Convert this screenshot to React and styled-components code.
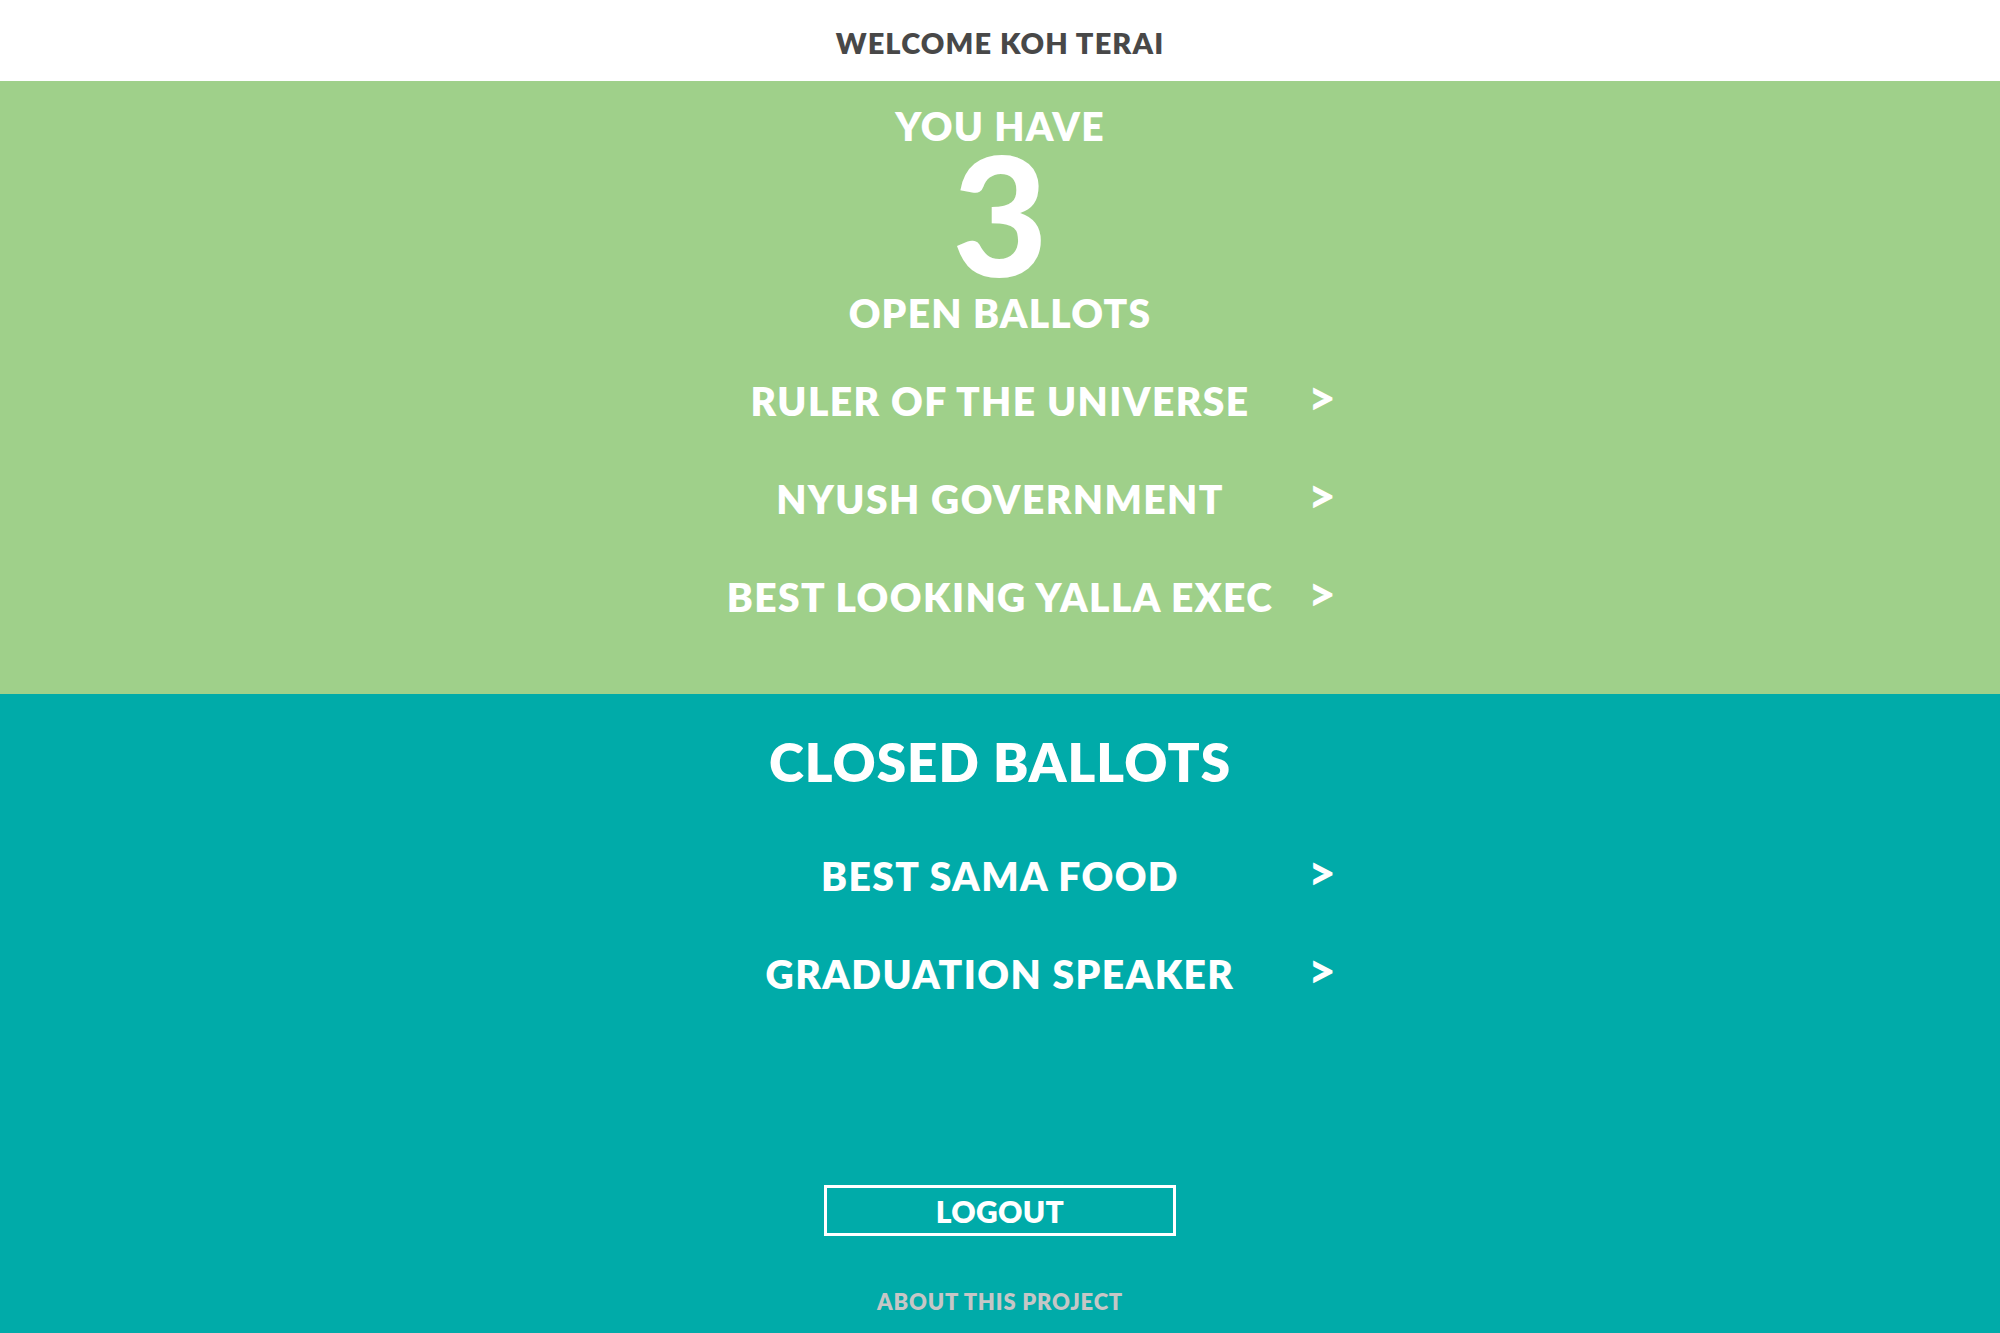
import React from 'react'
import styled, { createGlobalStyle } from 'styled-components'

const Global = createGlobalStyle`
  html, body {
    margin: 0;
    padding: 0;
    background: #00aba9;
  }
  body {
    font-family: Lato, "Open Sans", sans-serif;
    font-weight: 800;
    color: #fff;
  }
`

const Page = styled.div`
  width: 100%;
  display: flex;
  flex-direction: column;
`

const TopBar = styled.header`
  height: 81px;
  background: #fff;
  display: flex;
  align-items: center;
  justify-content: center;
  padding-top: 3px;
  box-sizing: border-box;
`

const Welcome = styled.h1`
  margin: 0;
  font-size: 29px;
  line-height: 1;
  font-weight: 800;
  letter-spacing: 1.1px;
  color: #484848;
`

const Section = styled.section`
  height: ${(p) => p.$height}px;
  background: ${(p) => p.$bg};
  box-sizing: border-box;
  padding-top: ${(p) => p.$top}px;
  display: flex;
  flex-direction: column;
  align-items: center;
`

const Label = styled.div`
  font-size: 39px;
  line-height: 1;
  letter-spacing: 1.2px;
  margin-top: ${(p) => p.$mt || 0}px;
`

const BigCount = styled.div`
  font-size: 165px;
  line-height: 120px;
  font-weight: 900;
  margin-top: 7px;
`

const Title = styled.h2`
  margin: 0;
  font-size: 53px;
  line-height: 1;
  font-weight: 800;
  letter-spacing: 1px;
`

const List = styled.div`
  width: 100%;
  display: flex;
  flex-direction: column;
  gap: 59px;
  margin-top: ${(p) => p.$mt}px;
`

const Row = styled.a`
  display: grid;
  grid-template-columns: 1fr 622px 1fr;
  align-items: start;
  height: 39px;
  color: #fff;
  text-decoration: none;
  cursor: pointer;
`

const RowName = styled.span`
  grid-column: 2;
  text-align: center;
  font-size: 39px;
  line-height: 1;
  letter-spacing: 1.4px;
  white-space: nowrap;
`

const Arrow = styled.span`
  grid-column: 3;
  justify-self: start;
  font-size: 48px;
  line-height: 39px;
  font-weight: 900;
  margin-top: -5px;
  margin-left: -3px;
`

const LogoutButton = styled.button`
  margin-top: 191px;
  width: 352px;
  height: 51px;
  box-sizing: border-box;
  border: 3px solid #fff;
  background: transparent;
  color: #fff;
  font-family: Lato, "Open Sans", sans-serif;
  font-weight: 800;
  font-size: 30px;
  line-height: 1;
  letter-spacing: 0.3px;
  padding: 0;
  cursor: pointer;
`

const About = styled.a`
  margin-top: 55px;
  font-size: 22px;
  line-height: 1;
  letter-spacing: 0.8px;
  color: #c6c6c6;
  text-decoration: none;
`

const openBallots = ['RULER OF THE UNIVERSE', 'NYUSH GOVERNMENT', 'BEST LOOKING YALLA EXEC']
const closedBallots = ['BEST SAMA FOOD', 'GRADUATION SPEAKER']

function BallotRow({ name }) {
  return (
    <Row>
      <RowName>{name}</RowName>
      <Arrow>&gt;</Arrow>
    </Row>
  )
}

export default function App() {
  return (
    <Page>
      <Global />
      <TopBar>
        <Welcome>WELCOME KOH TERAI</Welcome>
      </TopBar>

      <Section $bg="#9fd08a" $height={613} $top={26}>
        <Label>YOU HAVE</Label>
        <BigCount>{openBallots.length}</BigCount>
        <Label $mt={21}>OPEN BALLOTS</Label>
        <List $mt={49}>
          {openBallots.map((b) => (
            <BallotRow key={b} name={b} />
          ))}
        </List>
      </Section>

      <Section $bg="#00aba9" $height={639} $top={41}>
        <Title>CLOSED BALLOTS</Title>
        <List $mt={69}>
          {closedBallots.map((b) => (
            <BallotRow key={b} name={b} />
          ))}
        </List>
        <LogoutButton>LOGOUT</LogoutButton>
        <About>ABOUT THIS PROJECT</About>
      </Section>
    </Page>
  )
}
